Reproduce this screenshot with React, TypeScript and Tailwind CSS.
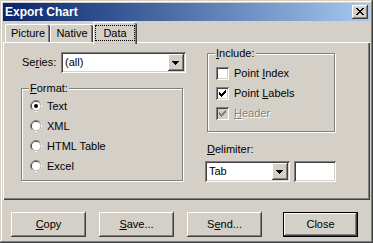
import type { ReactNode } from 'react';

const raised =
  'shadow-[inset_-1px_-1px_#404040,inset_1px_1px_#ffffff,inset_-2px_-2px_#808080,inset_2px_2px_#d4d0c8]';
const sunken =
  'shadow-[inset_1px_1px_#808080,inset_-1px_-1px_#ffffff,inset_2px_2px_#404040,inset_-2px_-2px_#d4d0c8]';

const DropButton = () => (
  <div className={`flex h-[17px] w-[16px] shrink-0 items-center justify-center bg-[#d4d0c8] ${raised}`}>
    <svg width="16" height="17" viewBox="0 0 16 17" shapeRendering="crispEdges">
      <path d="M4 7h7v1H4zM5 8h5v1H5zM6 9h3v1H6zM7 10h1v1H7z" fill="#000" />
    </svg>
  </div>
);

const Combo = ({ value, className }: { value: string; className: string }) => (
  <div className={`flex h-[21px] items-center bg-white p-[2px] ${className} ${sunken}`}>
    <span className="flex-1 pl-[2px] leading-[17px]">{value}</span>
    <DropButton />
  </div>
);

const Group = ({ label, className, children }: { label: ReactNode; className: string; children: ReactNode }) => (
  <div className={`relative border border-[#808080] shadow-[1px_1px_0_#ffffff,inset_1px_1px_0_#ffffff] ${className}`}>
    <span className="absolute -top-[7px] left-[7px] bg-[#d4d0c8] px-[1px] leading-[13px]">{label}</span>
    {children}
  </div>
);

const Radio = ({ checked, label }: { checked?: boolean; label: string }) => (
  <div className="flex h-[12px] items-center">
    <svg width="12" height="12" viewBox="0 0 12 12">
      <circle cx="6" cy="6" r="5.5" fill="none" stroke="#808080" />
      <path d="M9.89 2.11A5.5 5.5 0 0 1 2.11 9.89" fill="none" stroke="#ffffff" />
      <circle cx="6" cy="6" r="4.5" fill="none" stroke="#404040" />
      <path d="M9.18 2.82A4.5 4.5 0 0 1 2.82 9.18" fill="none" stroke="#d4d0c8" />
      <circle cx="6" cy="6" r="4" fill="#ffffff" />
      {checked ? <circle cx="6" cy="6" r="2" fill="#000" /> : null}
    </svg>
    <span className="ml-[5px] leading-[13px]">{label}</span>
  </div>
);

const Check = ({ checked, disabled, children }: { checked?: boolean; disabled?: boolean; children: ReactNode }) => (
  <div className="flex h-[13px] items-center">
    <div className={`h-[13px] w-[13px] shrink-0 ${disabled ? 'bg-[#d4d0c8]' : 'bg-white'} ${sunken}`}>
      {checked ? (
        <svg width="13" height="13" viewBox="0 0 13 13" shapeRendering="crispEdges">
          <path
            d="M3 5h1v3H3zM4 6h1v3H4zM5 7h1v3H5zM6 6h1v3H6zM7 5h1v3H7zM8 4h1v3H8zM9 3h1v3H9z"
            fill={disabled ? '#808080' : '#000'}
          />
        </svg>
      ) : null}
    </div>
    <span
      className={`ml-[5px] leading-[13px] ${disabled ? 'text-[#808080] [text-shadow:1px_1px_0_#ffffff]' : ''}`}
    >
      {children}
    </span>
  </div>
);

const Button = ({ children, isDefault, className = '' }: { children: ReactNode; isDefault?: boolean; className?: string }) => (
  <button
    type="button"
    className={`flex h-[25px] w-[75px] items-center justify-center bg-[#d4d0c8] leading-[13px] ${className} ${
      isDefault
        ? 'shadow-[inset_0_0_0_1px_#000000,inset_-2px_-2px_#404040,inset_2px_2px_#ffffff,inset_-3px_-3px_#808080,inset_3px_3px_#d4d0c8]'
        : raised
    }`}
  >
    {children}
  </button>
);

const Tab = ({ label, width }: { label: string; width: string }) => (
  <div
    className={`flex h-[18px] ${width} items-center justify-center rounded-t-[2px] border-l border-t border-white shadow-[inset_-1px_0_#404040,inset_-2px_0_#808080]`}
  >
    <span className="leading-[13px]">{label}</span>
  </div>
);

export default function App() {
  return (
    <div
      className={`flex h-[243px] w-[373px] flex-col bg-[#d4d0c8] p-[3px] text-[11px] text-black font-['Liberation_Sans',Arial,sans-serif] shadow-[inset_-1px_-1px_#404040,inset_1px_1px_#d4d0c8,inset_-2px_-2px_#808080,inset_2px_2px_#ffffff]`}
    >
      <div className="flex h-[18px] shrink-0 items-center justify-between bg-linear-to-r from-[#0a246a] to-[#a6caf0] pl-[2px] pr-[2px]">
        <span className="text-[12px] font-bold leading-[14px] text-white">Export Chart</span>
        <div className={`flex h-[14px] w-[16px] items-center justify-center bg-[#d4d0c8] ${raised}`}>
          <svg width="16" height="14" viewBox="0 0 16 14" shapeRendering="crispEdges">
            <path
              d="M4 3h2v1H4zM10 3h2v1h-2zM5 4h2v1H5zM9 4h2v1H9zM6 5h4v1H6zM7 6h2v1H7zM6 7h4v1H6zM5 8h2v1H5zM9 8h2v1H9zM4 9h2v1H4zM10 9h2v1h-2z"
              fill="#000"
            />
          </svg>
        </div>
      </div>

      <div className="mt-[1px] flex h-[20px] shrink-0 items-end pl-[2px]">
        <Tab label="Picture" width="w-[45px]" />
        <Tab label="Native" width="w-[43px]" />
        <div className="relative z-10 -mb-[2px] flex h-[22px] w-[44px] items-start rounded-t-[2px] border-l border-t border-white bg-[#d4d0c8] pl-[1px] pt-[2px] shadow-[inset_-1px_0_#404040,inset_-2px_0_#808080]">
          <div className="flex h-[16px] w-[40px] items-center justify-center border border-dotted border-black">
            <span className="leading-[13px]">Data</span>
          </div>
        </div>
      </div>

      <div className="flex h-[158px] shrink-0 gap-[19px] pl-[18px] pt-[10px] shadow-[inset_1px_1px_#ffffff,inset_-1px_-1px_#404040,inset_-2px_-2px_#808080]">
        <div className="flex w-[165px] flex-col">
          <div className="flex h-[21px] items-center">
            <span className="pl-[1px] leading-[13px]">
              Se<u>r</u>ies:
            </span>
            <Combo value="(all)" className="ml-auto w-[125px]" />
          </div>
          <Group
            label={
              <>
                <u>F</u>ormat:
              </>
            }
            className="mt-[15px] h-[93px] w-[162px]"
          >
            <div className="flex flex-col gap-[8px] pl-[8px] pt-[11px]">
              <Radio checked label="Text" />
              <Radio label="XML" />
              <Radio label="HTML Table" />
              <Radio label="Excel" />
            </div>
          </Group>
        </div>

        <div className="flex w-[131px] flex-col">
          <Group
            label={
              <>
                <u>I</u>nclude:
              </>
            }
            className="ml-[2px] mt-[1px] h-[79px] w-[128px]"
          >
            <div className="flex flex-col gap-[7px] pl-[8px] pt-[13px]">
              <Check>
                Point <u>I</u>ndex
              </Check>
              <Check checked>
                Point <u>L</u>abels
              </Check>
              <Check checked disabled>
                <u>H</u>eader
              </Check>
            </div>
          </Group>
          <span className="ml-[2px] mt-[11px] leading-[13px]">
            <u>D</u>elimiter:
          </span>
          <div className="mt-[5px] flex gap-[4px]">
            <Combo value="Tab" className="w-[85px]" />
            <div className={`h-[21px] w-[42px] bg-white ${sunken}`} />
          </div>
        </div>
      </div>

      <div className="mt-[12px] flex pl-[8px]">
        <Button>
          <u>C</u>opy
        </Button>
        <Button className="ml-[13px]">
          <u>S</u>ave...
        </Button>
        <Button className="ml-[13px]">
          S<u>e</u>nd...
        </Button>
        <Button isDefault className="ml-[21px]">
          Close
        </Button>
      </div>
    </div>
  );
}
